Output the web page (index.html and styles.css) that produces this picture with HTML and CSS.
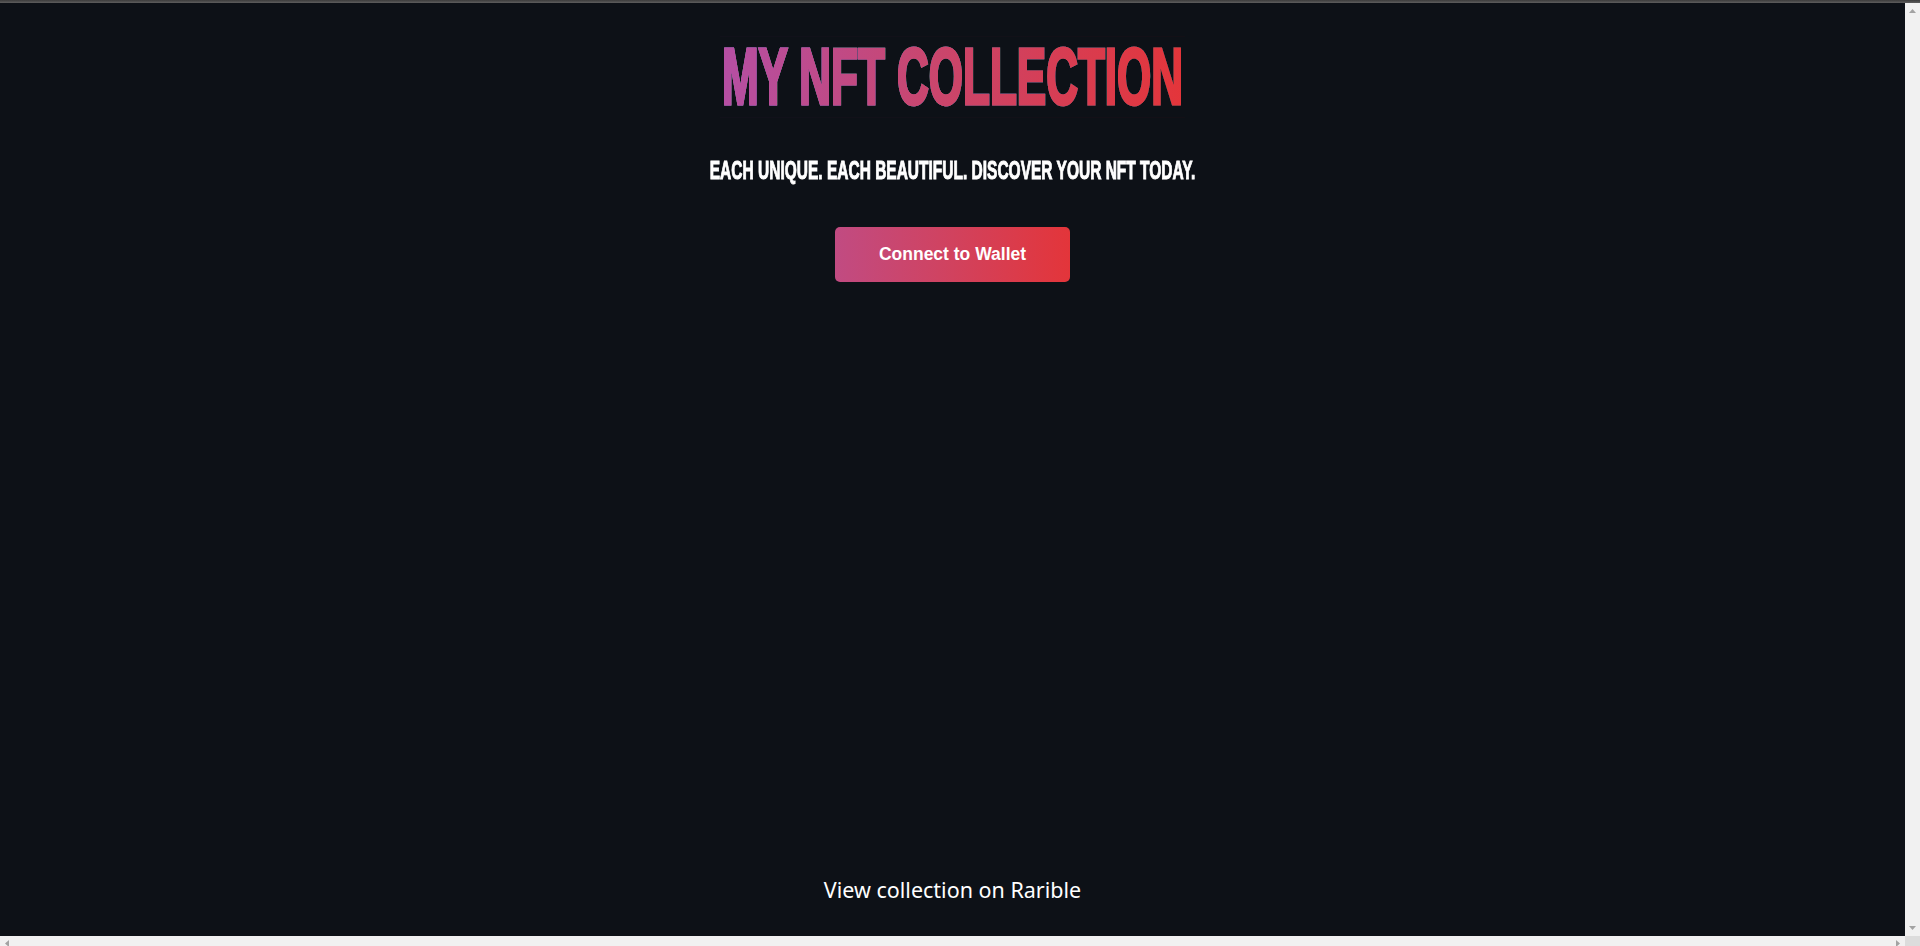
FILE: index.html
```html
<!DOCTYPE html>
<html lang="en">
<head>
<meta charset="utf-8">
<title>My NFT Collection</title>
<link rel="stylesheet" href="styles.css">
</head>
<body>
<div class="window">
  <div class="topline"></div>
  <div class="viewport">
    <main class="page">
      <header class="hero">
        <h1 class="title"><span class="title-text">MY NFT COLLECTION</span></h1>
        <p class="tagline"><span class="tagline-text">EACH UNIQUE. EACH BEAUTIFUL. DISCOVER YOUR NFT TODAY.</span></p>
        <button class="connect" type="button">Connect to Wallet</button>
      </header>
      <footer class="foot">
        <a class="foot-link" href="#">View collection on Rarible</a>
      </footer>
    </main>
    <div class="vscroll">
      <svg class="arrow-v" width="7" height="4" viewBox="0 0 7 4"><polygon points="3.5,0 7,4 0,4" fill="#a3a3a3"/></svg>
      <svg class="arrow-v" width="7" height="4" viewBox="0 0 7 4"><polygon points="0,0 7,0 3.5,4" fill="#a3a3a3"/></svg>
    </div>
  </div>
  <div class="hscroll">
    <svg class="arrow-h left" width="4" height="7" viewBox="0 0 4 7"><polygon points="0,3.5 4,0 4,7" fill="#a3a3a3"/></svg>
    <div class="htrack"></div>
    <svg class="arrow-h right" width="4" height="7" viewBox="0 0 4 7"><polygon points="0,0 4,3.5 0,7" fill="#a3a3a3"/></svg>
    <div class="corner"></div>
  </div>
</div>
</body>
</html>
```
FILE: styles.css
```css
html, body {
  margin: 0;
  padding: 0;
  height: 100%;
  overflow: hidden;
  background: #0d1117;
}

.window {
  width: 1920px;
  height: 946px;
  display: flex;
  flex-direction: column;
}

.topline {
  height: 3px;
  flex: 0 0 3px;
  background: linear-gradient(#3c3c3c 0, #5e5e5e 100%);
}

.viewport {
  flex: 1 1 auto;
  display: flex;
  min-height: 0;
}

.page {
  flex: 1 1 auto;
  display: flex;
  flex-direction: column;
  align-items: center;
  background: #0d1117;
  padding-bottom: 35px;
  box-sizing: border-box;
}

.hero {
  display: flex;
  flex-direction: column;
  align-items: center;
}

.title {
  margin: 52px 0 0;
  font-family: "Liberation Sans", Arial, sans-serif;
  font-weight: 700;
  font-size: 44px;
  line-height: 44px;
  height: 44px;
}

.title-text {
  position: relative;
  display: inline-block;
  transform: scaleY(1.82);
  transform-origin: 50% 50%;
  letter-spacing: 0;
  padding: 0 2px;
  background: #0d1117;
  color: #ffffff;
  -webkit-text-stroke: 1.6px #ffffff;
}

.title-text::after {
  content: "";
  position: absolute;
  left: 0;
  right: 0;
  top: 0;
  bottom: 0;
  background: linear-gradient(90deg, #b54fa4 0%, #c9466e 45%, #e4353a 100%);
  mix-blend-mode: darken;
  pointer-events: none;
}

.tagline {
  margin: 63.5px 0 0;
  font-family: "Liberation Sans", Arial, sans-serif;
  font-weight: 700;
  font-size: 15.5px;
  line-height: 15.5px;
  height: 15.5px;
  color: #ffffff;
}

.tagline-text {
  display: inline-block;
  transform: scaleY(1.62);
  transform-origin: 50% 50%;
  -webkit-text-stroke: 0.6px #ffffff;
}

.connect {
  margin-top: 49px;
  border: 0;
  border-radius: 5px;
  padding: 17px 43.5px;
  font-family: "Liberation Sans", Arial, sans-serif;
  font-weight: 700;
  font-size: 17.5px;
  line-height: 21px;
  color: #ffffff;
  background: linear-gradient(90deg, #c14b82 0%, #d1425e 50%, #e3353a 100%);
  cursor: pointer;
}

.foot {
  margin-top: auto;
}

.foot-link {
  display: block;
  font-family: "Noto Sans", "Open Sans", sans-serif;
  font-size: 21.5px;
  line-height: 22px;
  color: #ffffff;
  text-decoration: none;
}

.vscroll {
  flex: 0 0 15px;
  width: 15px;
  background: #f1f1f1;
  display: flex;
  flex-direction: column;
  justify-content: space-between;
  align-items: center;
  padding: 6px 0 6px;
  box-sizing: border-box;
}

.arrow-v {
  display: block;
}

.hscroll {
  flex: 0 0 10px;
  height: 10px;
  display: flex;
  align-items: flex-start;
  background: #f1f1f1;
  overflow: hidden;
}

.arrow-h {
  display: block;
  margin-top: 4px;
  flex: 0 0 4px;
}

.arrow-h.left {
  margin-left: 5px;
}

.htrack {
  flex: 1 1 auto;
}

.arrow-h.right {
  margin-right: 5px;
}

.corner {
  flex: 0 0 15px;
  height: 10px;
  background: #dcdcdc;
}
```
